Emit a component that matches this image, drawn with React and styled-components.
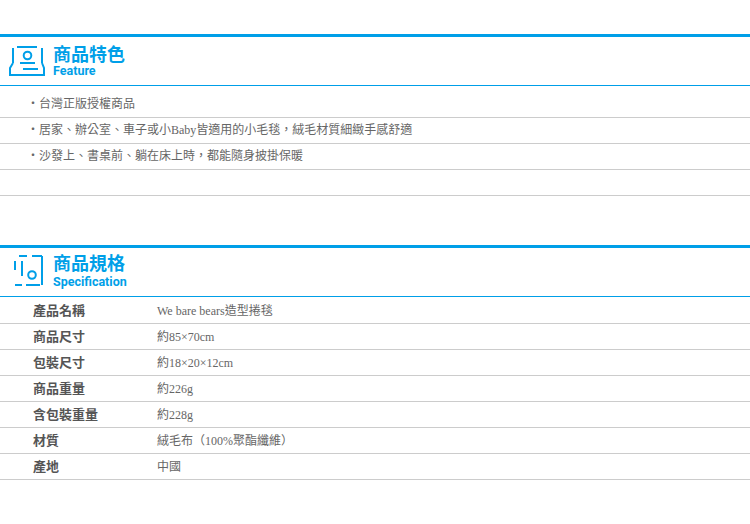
import React from 'react'
import styled, { createGlobalStyle } from 'styled-components'

const GlobalStyle = createGlobalStyle`
  html, body { margin: 0; padding: 0; background: #fff; }
  body { font-family: "Liberation Serif", "Noto Sans CJK TC", serif; }
`
const Page = styled.div`
  width: 750px;
  padding-top: 34px;
`
const Section = styled.section`
  margin-bottom: ${p => p.$gap || 0}px;
`
const Header = styled.div`
  display: flex;
  align-items: center;
  height: 48px;
  border-top: 3px solid #009fe8;
  border-bottom: 1px solid #009fe8;
  padding-left: ${p => p.$pad}px;
  gap: ${p => p.$iconGap}px;
`
const TitleBlock = styled.div`
  display: flex;
  flex-direction: column;
  align-self: flex-start;
  padding-top: ${p => p.$top}px;
  gap: ${p => p.$lineGap}px;
`
const Title = styled.h2`
  margin: 0;
  font: 700 18px/20px "Noto Sans CJK TC", sans-serif;
  color: #009fe8;
`
const SubTitle = styled.div`
  font: 700 12.5px/15px Roboto, sans-serif;
  color: #009fe8;
`
const FeatureRow = styled.div`
  height: ${p => (p.$first ? 31 : 25)}px;
  border-bottom: 1px solid #ccc;
  padding-left: 27px;
  font-size: 12px;
  line-height: ${p => (p.$first ? 37 : 25)}px;
  color: #666;
  white-space: nowrap;
`
const SpecList = styled.div`
  padding-top: 1px;
`
const SpecRow = styled.div`
  display: grid;
  grid-template-columns: 157px 1fr;
  height: 25.05px;
  border-bottom: 1px solid #ccc;
  font-size: 12px;
  line-height: 27px;
  color: #666;
`
const SpecLabel = styled.div`
  padding-left: 33px;
  font: 700 13px/24px "Noto Sans CJK TC", sans-serif;
  color: #555;
`
const SpecValue = styled.div`
  white-space: nowrap;
`

const FeatureIcon = () => (
  <svg width="36" height="32" viewBox="0 0 36 32" fill="none" stroke="#009fe8" strokeWidth="2">
    <path d="M8 2h20M4 3v15M33 3v15M11 18h15" />
    <circle cx="18.5" cy="10.5" r="3.8" />
    <path d="M4 18 1 23v7h34v-7l-2-5M14 24h15" />
  </svg>
)

const SpecIcon = () => (
  <svg width="32" height="34" viewBox="0 0 32 34" fill="none" stroke="#009fe8" strokeWidth="2">
    <path d="M7 1h8M20 1h10M30 1v29M3 6v9M10 6v15M3 30h7M14 30h14" />
    <circle cx="20" cy="20" r="3.8" />
  </svg>
)

const features = [
  '・台灣正版授權商品',
  '・居家、辦公室、車子或小Baby皆適用的小毛毯\uFF0C絨毛材質細緻手感舒適',
  '・沙發上、書桌前、躺在床上時\uFF0C都能隨身披掛保暖',
  '',
]

const specs = [
  ['產品名稱', 'We bare bears造型捲毯'],
  ['商品尺寸', '約85×70cm'],
  ['包裝尺寸', '約18×20×12cm'],
  ['商品重量', '約226g'],
  ['含包裝重量', '約228g'],
  ['材質', '絨毛布\uFF08100%聚酯纖維\uFF09'],
  ['產地', '中國'],
]

const App = () => {
  return (
    <Page>
      <GlobalStyle />
      <Section $gap={49}>
        <Header $pad={9} $iconGap={8}>
          <FeatureIcon />
          <TitleBlock $top={6} $lineGap={0}>
            <Title>商品特色</Title>
            <SubTitle>Feature</SubTitle>
          </TitleBlock>
        </Header>
        {features.map((text, i) => (
          <FeatureRow key={i} $first={i === 0}>{text}</FeatureRow>
        ))}
      </Section>
      <Section>
        <Header $pad={12} $iconGap={9}>
          <SpecIcon />
          <TitleBlock $top={4} $lineGap={2}>
            <Title>商品規格</Title>
            <SubTitle>Specification</SubTitle>
          </TitleBlock>
        </Header>
        <SpecList>
          {specs.map(([label, value]) => (
            <SpecRow key={label}>
              <SpecLabel>{label}</SpecLabel>
              <SpecValue>{value}</SpecValue>
            </SpecRow>
          ))}
        </SpecList>
      </Section>
    </Page>
  )
}

export default App
